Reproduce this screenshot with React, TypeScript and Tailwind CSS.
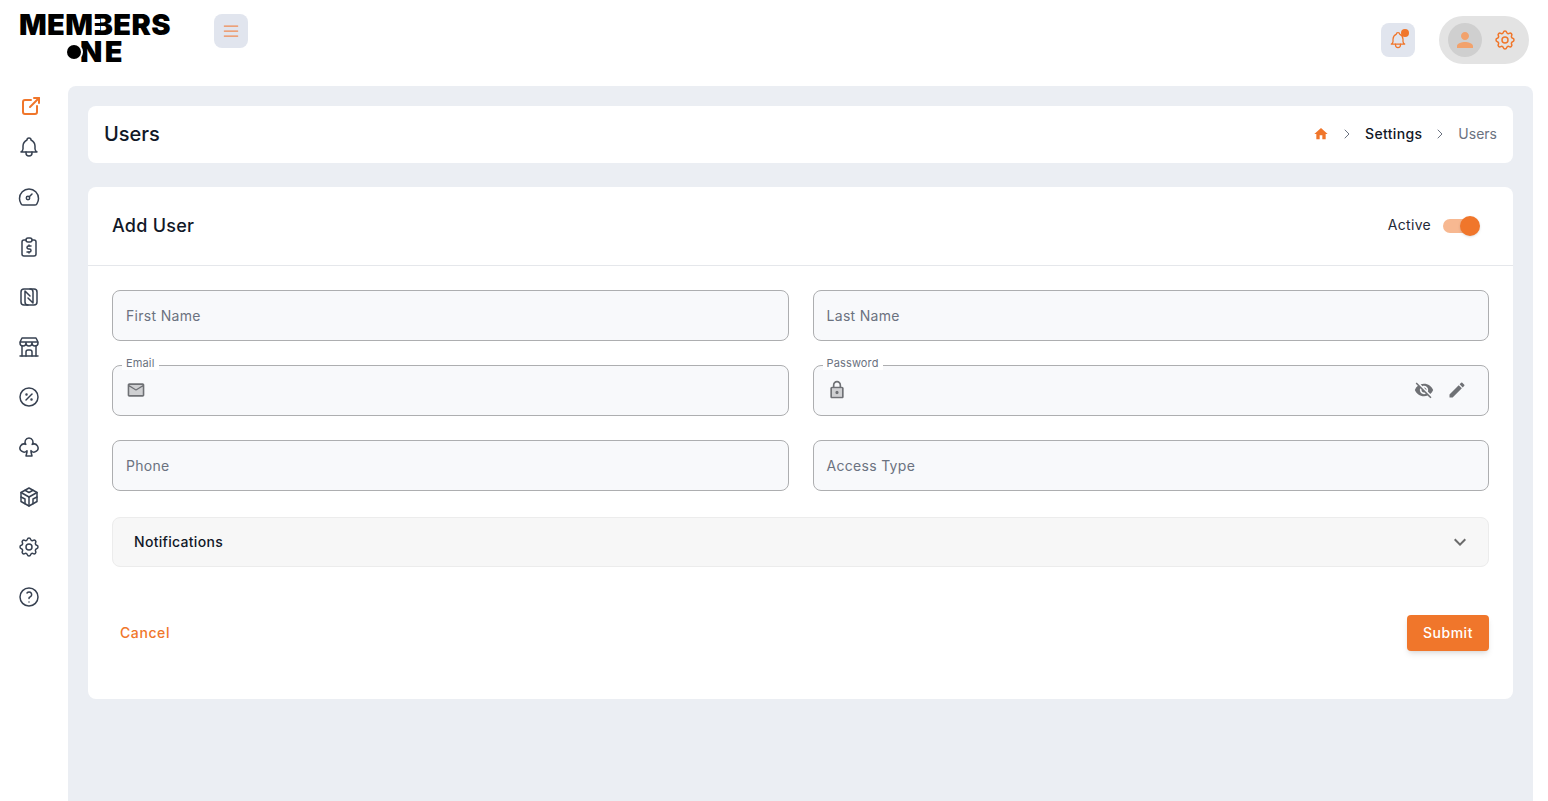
import { MdEdit, MdExpandMore, MdHome, MdPerson, MdVisibilityOff } from "react-icons/md";
import {
  TbBell,
  TbBrandCodesandbox,
  TbBuildingStore,
  TbChevronRight,
  TbClubs,
  TbDiscount,
  TbExternalLink,
  TbHelp,
  TbMenu2,
  TbNfc,
  TbReportMoney,
  TbSettings,
} from "react-icons/tb";

function DialIcon() {
  return (
    <svg viewBox="0 0 24 24" className="h-6 w-6" fill="none" stroke="currentColor" strokeWidth={1.5} strokeLinecap="round">
      <path d="M12 4a9.5 9.5 0 0 1 9.5 9.5c0 2-.6 3.8-1.6 5.3-.5.8-1.4 1.2-2.3 1.2H6.4c-.9 0-1.8-.4-2.3-1.2a9.5 9.5 0 0 1-1.6-5.3A9.5 9.5 0 0 1 12 4z" />
      <circle cx="11" cy="13" r="1.7" />
      <path d="M12.3 11.7 15 9" />
    </svg>
  );
}

const NAV_ICONS = [
  TbReportMoney,
  TbNfc,
  TbBuildingStore,
  TbDiscount,
  TbClubs,
  TbBrandCodesandbox,
  TbSettings,
  TbHelp,
];

function MailIcon() {
  return (
    <svg viewBox="0 0 24 24" className="mb-[2px] h-5 w-5" fill="#6f7175">
      <path opacity=".3" d="M20 6H4l8 4.99zM4 8v10h16V8l-8 5z" />
      <path d="M20 4H4c-1.1 0-2 .9-2 2v12c0 1.1.9 2 2 2h16c1.1 0 2-.9 2-2V6c0-1.1-.9-2-2-2zm0 2-8 4.99L4 6h16zm0 12H4V8l8 5 8-5v10z" />
    </svg>
  );
}

function LockIcon() {
  return (
    <svg viewBox="0 0 24 24" className="mb-[2px] h-5 w-5" fill="#6f7175">
      <path opacity=".3" d="M6 20h12V10H6v10zm6-7c1.1 0 2 .9 2 2s-.9 2-2 2-2-.9-2-2 .9-2 2-2z" />
      <path d="M18 8h-1V6c0-2.76-2.24-5-5-5S7 3.24 7 6v2H6c-1.1 0-2 .9-2 2v10c0 1.1.9 2 2 2h12c1.1 0 2-.9 2-2V10c0-1.1-.9-2-2-2zM9 6c0-1.66 1.34-3 3-3s3 1.34 3 3v2H9V6zm9 14H6V10h12v10zm-6-3c1.1 0 2-.9 2-2s-.9-2-2-2-2 .9-2 2 .9 2 2 2z" />
    </svg>
  );
}

function Logo() {
  return (
    <div className="flex w-[152px] flex-col items-center whitespace-nowrap text-[29px] font-black leading-[27px] tracking-[0.45px] text-black">
      <div>
        MEM
        <span className="relative inline-block">
          B
          <span className="absolute left-0 top-[8px] h-[4px] w-[7px] bg-white" />
          <span className="absolute left-0 top-[15px] h-[4px] w-[7px] bg-white" />
        </span>
        ERS
      </div>
      <div className="ml-[2px] flex items-center tracking-[2.5px]">
        <span className="relative z-10 mr-[-1px] h-[14px] w-[14px] rounded-full bg-black ring-2 ring-white" />
        NE
      </div>
    </div>
  );
}

function Field({ label, filled, children }: { label: string; filled?: boolean; children?: React.ReactNode }) {
  return (
    <div className="relative flex h-[51px] items-center rounded-lg border border-[#adaeb0] bg-[#f8f9fb] px-[13px]">
      {filled ? (
        <span className="absolute left-[9px] top-[-10px] bg-white px-1 text-[11px] leading-[14px] tracking-[0.15px] text-[#6b7280]">
          {label}
        </span>
      ) : (
        <span className="text-[14px] tracking-[0.3px] text-[#6b7280]">{label}</span>
      )}
      {children}
    </div>
  );
}

export default function App() {
  return (
    <div className="flex h-[801px] flex-col overflow-hidden bg-white font-['Inter',sans-serif]">
      <header className="flex h-[86px] shrink-0 items-start justify-between pl-[19px] pr-[19px]">
        <div className="flex items-start gap-[43px] pt-[11px]">
          <Logo />
          <button className="mt-[3px] flex h-[34px] w-[34px] items-center justify-center rounded-lg bg-[#e1e5ee] text-[#ef8a52]">
            <TbMenu2 size={20} strokeWidth={1.5} />
          </button>
        </div>
        <div className="flex items-center gap-6 pt-4">
          <button className="relative flex h-[34px] w-[34px] items-center justify-center rounded-lg bg-[#e1e5ee] text-[#f0762b]">
            <TbBell size={20} strokeWidth={1.5} />
            <span className="absolute right-[6px] top-[6px] h-2 w-2 rounded-full bg-[#f0762b]" />
          </button>
          <div className="flex h-12 w-[90px] items-center gap-[11px] rounded-full bg-[#e3e3e3] pl-[9px]">
            <span className="flex h-[34px] w-[34px] items-center justify-center rounded-full bg-[#cfcfcf] text-[#f2a26c]">
              <MdPerson size={24} />
            </span>
            <TbSettings size={24} strokeWidth={1.5} className="text-[#f0762b]" />
          </div>
        </div>
      </header>

      <div className="flex flex-1">
        <aside className="flex w-[68px] shrink-0 flex-col items-center pr-[10px] text-[#374151]">
          <TbExternalLink size={24} strokeWidth={2} className="ml-[3px] mt-2 text-[#f0762b]" />
          <TbBell size={24} strokeWidth={1.5} className="mt-[17px]" />
          <div className="mt-[26px]">
            <DialIcon />
          </div>
          {NAV_ICONS.map((Icon, i) => (
            <Icon key={i} size={24} strokeWidth={1.5} className="mt-[26px]" />
          ))}
        </aside>

        <main className="mr-[15px] flex-1 rounded-t-lg bg-[#ebeef3] p-5">
          <div className="flex h-[57px] items-center justify-between rounded-lg bg-white pl-4 pr-4">
            <h1 className="pb-[2px] text-[20px] font-medium text-[#111827]">Users</h1>
            <nav className="flex items-center pb-[2px] text-[14px] font-medium tracking-[0.35px]">
              <MdHome size={16} className="text-[#f0762b]" />
              <TbChevronRight size={16} strokeWidth={1.5} className="mx-[10px] text-[#6b7280]" />
              <span className="text-[#111827]">Settings</span>
              <TbChevronRight size={16} strokeWidth={1.5} className="mx-[10px] text-[#6b7280]" />
              <span className="font-normal tracking-[0px] text-[#6b7280]">Users</span>
            </nav>
          </div>

          <section className="mt-6 h-[512px] rounded-lg bg-white">
            <div className="flex h-[79px] items-center justify-between border-b border-[#e5e7eb] pl-6 pr-[36px]">
              <h2 className="pb-[2px] text-[18px] font-medium tracking-[0.25px] text-[#111827]">Add User</h2>
              <div className="flex items-center gap-3 text-[14px] tracking-[0.3px] text-[#1f2937]">
                <span className="pb-[4px]">Active</span>
                <span className="relative h-[14px] w-[34px] rounded-full bg-[#f7b891]">
                  <span className="absolute right-[-3px] top-[-3px] h-5 w-5 rounded-full bg-[#f0762b] shadow" />
                </span>
              </div>
            </div>

            <div className="px-6 pt-6">
              <div className="grid grid-cols-2 gap-x-6 gap-y-6">
                <Field label="First Name" />
                <Field label="Last Name" />
                <Field label="Email" filled>
                  <MailIcon />
                </Field>
                <Field label="Password" filled>
                  <LockIcon />
                  <span className="mb-[2px] ml-auto flex items-center gap-[13px] pr-2 text-[#6f7175]">
                    <MdVisibilityOff size={20} />
                    <MdEdit size={20} />
                  </span>
                </Field>
                <Field label="Phone" />
                <Field label="Access Type" />
              </div>

              <div className="mt-[26px] flex h-[50px] items-center justify-between rounded-lg border border-[#ececec] bg-[#f7f7f7] pl-[21px] pr-4">
                <span className="pb-[2px] text-[14px] font-medium tracking-[0.3px] text-[#111827]">Notifications</span>
                <MdExpandMore size={24} className="text-[#6b6b6b]" />
              </div>

              <div className="mt-12 flex items-center justify-between">
                <button className="pb-[2px] pl-2 text-[14px] font-medium tracking-[0.6px] text-[#f0762b]">Cancel</button>
                <button className="h-9 w-[82px] rounded bg-[#f0762b] pb-[2px] text-[14px] font-medium tracking-[0.5px] text-white shadow-md">
                  Submit
                </button>
              </div>
            </div>
          </section>
        </main>
      </div>
    </div>
  );
}
